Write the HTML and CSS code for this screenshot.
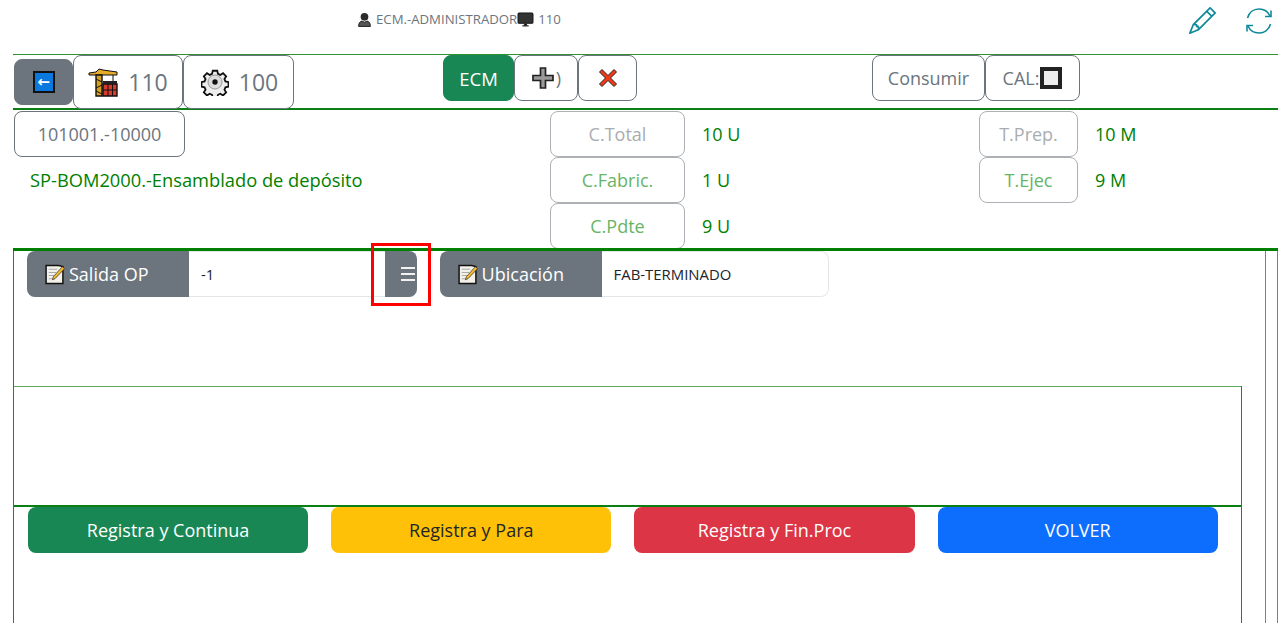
FILE: index.html
```html
<!DOCTYPE html>
<html lang="es">
<head>
<meta charset="utf-8">
<title>Registro de operación</title>
<link rel="stylesheet" href="styles.css">
</head>
<body>
<svg class="defs" width="0" height="0" aria-hidden="true">
  <defs>
    <symbol id="note" viewBox="0 0 20 20">
      <path d="M2 1.500h12l4 1v16H2z" fill="#f3f1ea" stroke="#111" stroke-width="1.400"/>
      <path d="M4.500 5h8M4.500 8h7M4.500 11h5M4.500 14h4" stroke="#aaa" stroke-width="1"/>
      <path d="M8 15l1-3L17.500 2.500 19.500 4.500 10.500 14z" fill="#f5b82e" stroke="#333" stroke-width=".7"/>
    </symbol>
  </defs>
</svg>
<div class="page">
  <header class="topbar">
    <div class="user">
      <svg class="ic-user" viewBox="0 0 14 14"><circle cx="7" cy="4.500" r="3.600" fill="#2b2b2b"/><path d="M1.500 13.500c0-3 1-4.500 3-5l2.500 1 2.500-1c2 .5 3 2 3 5z" fill="#555" stroke="#111" stroke-width=".8"/></svg>
      <span>ECM.-ADMINISTRADOR</span>
      <svg class="ic-pc" viewBox="0 0 16 14"><rect x="1" y="1" width="14" height="9.500" rx="1" fill="#333" stroke="#111"/><path d="M5 13h6M7 11h2v2H7z" stroke="#333"/></svg>
      <span class="user-num">110</span>
    </div>
    <div class="top-actions">
      <svg class="ic-edit" viewBox="0 0 16 16" fill="currentColor"><path d="M12.146.146a.5.5 0 0 1 .708 0l3 3a.5.5 0 0 1 0 .708l-10 10a.5.5 0 0 1-.168.11l-5 2a.5.5 0 0 1-.65-.65l2-5a.5.5 0 0 1 .11-.168l10-10zM11.207 2.500 13.500 4.793 14.793 3.500 12.500 1.207 11.207 2.500zm1.586 3L10.500 3.207 4 9.707V10h.5a.5.5 0 0 1 .5.5v.5h.5a.5.5 0 0 1 .5.5v.5h.293l6.500-6.500zm-9.761 5.175-.106.106-1.528 3.821 3.821-1.528.106-.106A.5.5 0 0 1 5 12.500V12h-.5a.5.5 0 0 1-.5-.5V11h-.5a.5.5 0 0 1-.468-.325z"/></svg>
      <svg class="ic-sync" viewBox="0 0 28 28" fill="none" stroke="currentColor" stroke-width="1.600"><path d="M2.500 11C4 5.500 8.500 2 14 2c5 0 9 2.500 11 7"/><path d="M25.500 17C24 22.500 19.500 26 14 26c-5 0-9-2.500-11-7"/><path d="M26 3.500V9.500h-6"/><path d="M2 24.500V18.500h6"/></svg>
    </div>
  </header>

  <nav class="toolbar">
    <div class="tool-group">
      <button class="btn btn-back" type="button">
        <span class="back-key">←</span>
      </button>
      <button class="btn btn-outline btn-tall" type="button">
        <svg class="ic-crane" viewBox="0 0 30 30">
          <path d="M8 5l3-3 4 1 14 2v3H1V6z" fill="#e6ab28" stroke="#111" stroke-width="1"/>
          <path d="M8 8h6v21H8z" fill="#d8a020" stroke="#111" stroke-width="1.400"/>
          <path d="M8 12l6 3M14 18l-6 3M8 24l6 3" stroke="#111"/>
          <path d="M15 17h14v12H15z" fill="#d93a2b" stroke="#111" stroke-width="1.400"/>
          <path d="M15 14h14v3H15z" fill="#222"/>
          <path d="M15 23h14M20 17v12M24.500 17v12" stroke="#111"/>
          <path d="M25 8v6" stroke="#111"/>
        </svg>
        <span>110</span>
      </button>
      <button class="btn btn-outline btn-tall btn-tall-wide" type="button">
        <svg class="ic-gear" viewBox="0 0 28 28">
          <path d="M11.500 1.500h5l.8 3.500 2.600 1.100 3-1.900 3.500 3.500-1.900 3 1.100 2.600 3.400.8v5l-3.400.8-1.100 2.600 1.900 3-3.500 3.500-3-1.900-2.600 1.100-.8 3.400h-5l-.8-3.400-2.600-1.100-3 1.900-3.500-3.500 1.900-3-1.100-2.600-3.400-.8v-5l3.400-.8 1.100-2.600-1.900-3 3.500-3.500 3 1.900 2.600-1.100z" transform="translate(1.400 1.400) scale(.9)" fill="#eee" stroke="#111" stroke-width="2"/>
          <circle cx="14" cy="14" r="7" fill="#ddd" stroke="#999"/>
          <circle cx="14" cy="14" r="2.700" fill="#111"/>
        </svg>
        <span>100</span>
      </button>
    </div>
    <div class="tool-group">
      <button class="btn btn-ecm" type="button">ECM</button>
      <button class="btn btn-outline btn-plus" type="button">
        <svg class="ic-plus" viewBox="0 0 24 24"><path d="M9.500 2h5v7.500H22v5h-7.500V22h-5v-7.500H2v-5h7.500z" fill="#9a9a9a" stroke="#222" stroke-width="1.700"/></svg><span class="paren">)</span>
      </button>
      <button class="btn btn-outline btn-x" type="button">
        <svg class="ic-x" viewBox="0 0 20 20"><path d="M4 1.500L10 7.500 16 1.500 18.500 4 12.500 10 18.500 16 16 18.500 10 12.500 4 18.500 1.500 16 7.500 10 1.500 4z" fill="#f03a17" stroke="#222" stroke-width="1"/></svg>
      </button>
    </div>
    <div class="tool-group">
      <button class="btn btn-outline btn-consumir" type="button">Consumir</button>
      <button class="btn btn-outline btn-cal" type="button">CAL:<span class="check"></span></button>
    </div>
  </nav>

  <section class="info">
    <div class="info-col">
      <button class="btn btn-outline btn-code" type="button">101001.-10000</button>
      <p class="desc">SP-BOM2000.-Ensamblado de depósito</p>
    </div>
    <div class="info-col info-stats">
      <div class="stat"><span class="chip chip-qty chip-gray">C.Total</span><span class="val">10 U</span></div>
      <div class="stat"><span class="chip chip-qty chip-green">C.Fabric.</span><span class="val">1 U</span></div>
      <div class="stat"><span class="chip chip-qty chip-green">C.Pdte</span><span class="val">9 U</span></div>
    </div>
    <div class="info-col info-stats">
      <div class="stat"><span class="chip chip-time chip-gray">T.Prep.</span><span class="val">10 M</span></div>
      <div class="stat"><span class="chip chip-time chip-green">T.Ejec</span><span class="val">9 M</span></div>
    </div>
  </section>

  <main class="work">
    <div class="work-main">
      <div class="fields">
        <div class="field">
          <span class="field-label"><svg class="ic-note"><use href="#note"/></svg>Salida OP</span>
          <span class="field-input">-1</span>
          <button class="field-menu" type="button" aria-label="Menú"><span></span><span></span><span></span></button>
          <span class="marker"></span>
        </div>
        <div class="field">
          <span class="field-label"><svg class="ic-note"><use href="#note"/></svg>Ubicación</span>
          <span class="field-input">FAB-TERMINADO</span>
        </div>
      </div>
      <div class="inner">
        <div class="inner-empty"></div>
        <div class="actions">
          <button class="act act-green" type="button">Registra y Continua</button>
          <button class="act act-yellow" type="button">Registra y Para</button>
          <button class="act act-red" type="button">Registra y Fin.Proc</button>
          <button class="act act-blue" type="button">VOLVER</button>
        </div>
      </div>
    </div>
    <div class="work-side"></div>
  </main>
</div>
</body>
</html>
```
FILE: styles.css
```css
* { box-sizing: border-box; }
html, body { margin: 0; height: 100%; overflow: hidden; background: #fff; }
body { font-family: "Open Sans", "Noto Sans", sans-serif; font-size: 18px; color: #212529; }
.defs { position: absolute; }
.page { display: flex; flex-direction: column; height: 623px; width: 1265px; margin-left: 13px; }

.topbar { flex: 0 0 55px; display: flex; justify-content: space-between; border-bottom: 1px solid #2f9132; }
.user { display: flex; align-items: center; height: 38px; padding-left: 344px; font-size: 13.200px; color: #6c757d; }
.ic-user { width: 15px; height: 15px; margin-right: 4px; }
.ic-pc { width: 17px; height: 15px; margin: 0 4px 0 0; }
.top-actions { display: flex; gap: 29px; color: #0f8a99; padding: 7px 5px 0 0; }
.ic-edit { width: 27px; height: 27px; }
.ic-sync { width: 28px; height: 28px; }

.btn { display: inline-flex; align-items: center; justify-content: center; font: inherit; background: #fff; color: #6c757d; border: 1px solid #6c757d; border-radius: 8px; padding: 0; }
.toolbar { flex: 0 0 55px; display: grid; grid-template-columns: repeat(3, 429px); padding-left: 1px; border-bottom: 2px solid #0c7f14; }
.tool-group { display: flex; align-items: flex-start; height: 53px; }
.btn-back { width: 59px; height: 46px; margin-top: 4px; background: #6c757d; border-color: #6c757d; }
.back-key { display: flex; align-items: center; justify-content: center; width: 22px; height: 22px; background: #0a78dc; border: 2px solid #111; color: #fff; font: 700 15px/1 "DejaVu Sans", sans-serif; }
.btn-tall { width: 110px; height: 54px; gap: 10px; font-size: 23px; }
.btn-tall-wide { width: 111px; padding-left: 2px; }
.ic-crane { width: 30px; height: 30px; }
.ic-gear { width: 28px; height: 28px; }
.btn-ecm { width: 71px; height: 46px; background: #198754; border-color: #198754; color: #fff; font-size: 18.500px; }
.btn-plus { width: 64px; height: 46px; gap: 1px; }
.ic-plus { width: 24px; height: 24px; }
.paren { color: #6c757d; font-size: 18px; }
.btn-x { width: 59px; height: 46px; }
.ic-x { width: 20px; height: 20px; }
.btn-consumir { width: 113px; height: 46px; }
.btn-cal { width: 95px; height: 46px; gap: 1px; }
.check { display: block; width: 22px; height: 22px; background: #eee; border: 4px solid #222; }

.info { flex: 0 0 138px; min-height: 0; display: grid; grid-template-columns: repeat(3, 429px); padding: 1px 0 0 1px; }
.info-col { display: flex; flex-direction: column; align-items: flex-start; }
.info-stats { padding-left: 107px; }
.btn-code { width: 171px; height: 46px; }
.desc { margin: 11px 0 0 16px; color: #008000; font-size: 18.300px; line-height: 24px; white-space: nowrap; }
.stat { display: flex; align-items: center; flex: 0 0 46px; }
.chip { display: flex; align-items: center; justify-content: center; height: 46px; background: #fff; border: 1px solid #adb1b5; border-radius: 8px; }
.chip-qty { width: 135px; margin-right: 17px; }
.chip-time { width: 99px; margin-right: 17px; }
.chip-gray { color: #a9adb1; }
.chip-green { color: #66b566; }
.val { color: #008000; }

.work { position: relative; flex: 1; display: flex; border-top: 3px solid #008000; }
.work-main { width: 1253px; display: flex; flex-direction: column; border-left: 1px solid #188a1e; border-right: 1px solid #4aa34d; }
.work-side { width: 12px; border-right: 1px solid #4aa34d; }
.fields { flex: 0 0 135px; display: flex; gap: 23px; padding-left: 13px; }
.field { position: relative; display: flex; width: 389.600px; height: 46px; border-radius: 8px; box-shadow: inset 0 0 0 1px #e4e7ea; }
.field-label { flex: 0 0 162px; display: flex; align-items: center; padding-left: 17px; background: #6c757d; color: #fff; border-radius: 8px 0 0 8px; white-space: nowrap; }
.ic-note { width: 21px; height: 21px; margin-right: 4px; }
.field-input { flex: 1; display: flex; align-items: center; padding-left: 12px; font-size: 14.900px; color: #212529; }
.field-menu { flex: 0 0 32px; display: flex; flex-direction: column; align-items: flex-end; justify-content: center; gap: 4px; padding: 0 1px 0 0; margin: 0; border: 0; background: #6c757d; border-radius: 0 8px 8px 0; }
.field-menu span { display: block; width: 14px; height: 2px; margin-right: 1px; background: #f2f2f2; }
.marker { position: absolute; left: 344px; top: -8px; width: 60px; height: 63px; border: 3px solid #f00; pointer-events: none; }

.inner { flex: 1; display: flex; flex-direction: column; width: 1228px; border-right: 1px solid #188a1e; }
.inner-empty { flex: 0 0 121px; border-top: 1px solid #5da95f; border-bottom: 2px solid #0c7f14; }
.actions { display: flex; gap: 23px; padding-left: 14px; }
.act { width: 280.200px; height: 46px; border: 0; border-radius: 8px; font: inherit; color: #fff; }
.act-green { background: #198754; }
.act-yellow { background: #ffc107; color: #212529; }
.act-red { background: #dc3545; }
.act-blue { background: #0d6efd; }
```
